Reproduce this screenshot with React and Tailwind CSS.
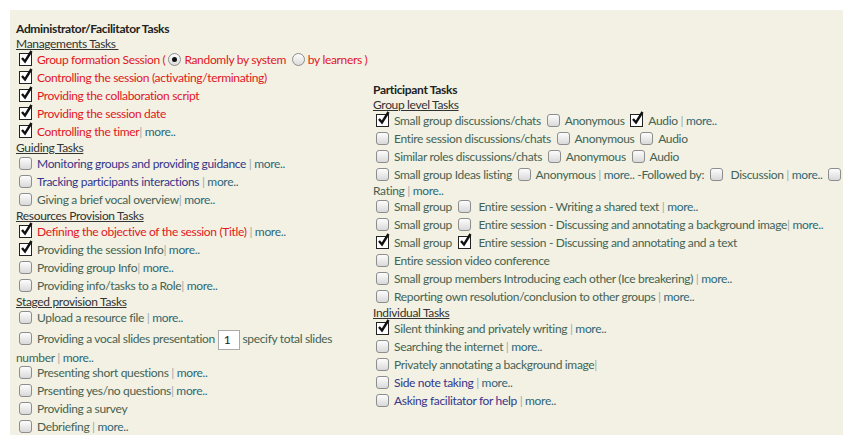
import React from 'react';

const RED = 'text-[#e3161f]';
const BLUE = 'text-[#35358a]';
const GREEN = 'text-[#456353]';

const Box = ({ checked }) => (
    <span className="relative inline-block w-[13px] h-[13px] align-[-2px] mr-[5px] ml-[3px]">
        {checked ? (
            <span className="absolute inset-0 border border-[#222] bg-white" />
        ) : (
            <span className="absolute inset-0 border border-[#8d8d8d] rounded-[3px] bg-gradient-to-b from-[#fdfdfd] to-[#d9d9d9]" />
        )}
        {checked && (
            <svg className="absolute left-[1px] top-[-3px]" width="13" height="14" viewBox="0 0 13 14">
                <path d="M2 8 L5 11.5 L11.5 1" fill="none" stroke="#111" strokeWidth="2.4" />
            </svg>
        )}
    </span>
);

const Radio = ({ on }) => (
    <span className="relative inline-block w-[13px] h-[13px] align-[-2px] mx-[3px] rounded-full border border-[#8d8d8d] bg-gradient-to-b from-[#fdfdfd] to-[#dcdcdc]">
        {on && <span className="absolute left-[3px] top-[3px] w-[5px] h-[5px] rounded-full bg-[#111]" />}
    </span>
);

const More = ({ bar = ' | ' }) => (
    <>
        <span className="text-[#9aa8a8]">{bar}</span>
        <span className="text-[#2e6878]">more..</span>
    </>
);

const Title = ({ children }) => (
    <div className="font-bold text-[#222] leading-[16px]">{children}</div>
);

const Heading = ({ children }) => (
    <div className="leading-[14px] text-[#333] underline">{children}</div>
);

const Row = ({ children, className = '' }) => (
    <div className={`leading-[18px] whitespace-nowrap ${className}`}>{children}</div>
);

export default function App() {
    return (
        <div className="w-[854px] h-[446px] bg-white p-[10px] pr-[11px]" style={{ fontFamily: 'Lato, "Liberation Sans", sans-serif' }}>
            <div className="h-[425px] bg-[#f2f1e3] flex text-[12px] tracking-[-0.33px] pl-[6px] pt-[11px]">
                {/* left column */}
                <div className="w-[355px]">
                    <Title>Administrator/Facilitator Tasks</Title>
                    <Heading>Managements Tasks&nbsp;</Heading>
                    <Row className={RED}><Box checked />Group formation Session (<Radio on />Randomly by system <Radio />by learners )</Row>
                    <Row className={RED}><Box checked />Controlling the session (activating/terminating)</Row>
                    <Row className={RED}><Box checked />Providing the collaboration script</Row>
                    <Row className={RED}><Box checked />Providing the session date</Row>
                    <Row className={RED}><Box checked />Controlling the timer<More bar="| " /></Row>
                    <Heading>Guiding Tasks</Heading>
                    <Row className={BLUE}><Box />Monitoring groups and providing guidance<More /></Row>
                    <Row className={BLUE}><Box />Tracking participants interactions<More /></Row>
                    <Row className={GREEN}><Box />Giving a brief vocal overview<More bar="| " /></Row>
                    <Heading>Resources Provision Tasks</Heading>
                    <Row className={RED}><Box checked />Defining the objective of the session (Title)<More /></Row>
                    <Row className={GREEN}><Box checked />Providing the session Info<More bar="| " /></Row>
                    <Row className={GREEN}><Box />Providing group Info<More bar="| " /></Row>
                    <Row className={GREEN}><Box />Providing info/tasks to a Role<More bar="| " /></Row>
                    <Heading>Staged provision Tasks</Heading>
                    <Row className={GREEN}><Box />Upload a resource file<More /></Row>
                    <div className={`${GREEN} leading-[24px] whitespace-nowrap`}>
                        <Box />Providing a vocal slides presentation{' '}
                        <span className="inline-block w-[22px] h-[20px] align-middle border border-[#aaa] bg-white text-[#222] pl-[5px] leading-[18px]">1</span>
                        {' '}specify total slides
                    </div>
                    <div className={`${GREEN} leading-[13px]`}>number<More /></div>
                    <Row className={GREEN}><Box />Presenting short questions<More /></Row>
                    <Row className={GREEN}><Box />Prsenting yes/no questions<More bar="| " /></Row>
                    <Row className={GREEN}><Box />Providing a survey</Row>
                    <Row className={GREEN}><Box />Debriefing<More /></Row>
                </div>

                {/* right column */}
                <div className="w-[465px] ml-[2px] pt-[61px]">
                    <Title>Participant Tasks</Title>
                    <Heading>Group level Tasks</Heading>
                    <Row className={GREEN}><Box checked />Small group discussions/chats <Box />Anonymous <Box checked />Audio<More /></Row>
                    <Row className={GREEN}><Box />Entire session discussions/chats <Box />Anonymous <Box />Audio</Row>
                    <Row className={GREEN}><Box />Similar roles discussions/chats <Box />Anonymous <Box />Audio</Row>
                    <Row className={GREEN}><Box />Small group Ideas listing <Box />Anonymous<More /> -Followed by: <Box /> Discussion<More /> <Box /></Row>
                    <div className={`${GREEN} leading-[14px]`}>Rating<More /></div>
                    <Row className={GREEN}><Box />Small group <Box /> Entire session - Writing a shared text<More /></Row>
                    <Row className={GREEN}><Box />Small group <Box /> Entire session - Discussing and annotating a background image<More bar="| " /></Row>
                    <Row className={GREEN}><Box checked />Small group <Box checked /> Entire session - Discussing and annotating and a text</Row>
                    <Row className={GREEN}><Box />Entire session video conference</Row>
                    <Row className={GREEN}><Box />Small group members Introducing each other (Ice breakering)<More /></Row>
                    <Row className={GREEN}><Box />Reporting own resolution/conclusion to other groups<More /></Row>
                    <Heading>Individual Tasks</Heading>
                    <Row className={GREEN}><Box checked />Silent thinking and privately writing<More /></Row>
                    <Row className={GREEN}><Box />Searching the internet<More /></Row>
                    <Row className={GREEN}><Box />Privately annotating a background image<span className="text-[#9aa8a8]">|</span></Row>
                    <Row className={BLUE}><Box />Side note taking<More /></Row>
                    <Row className={BLUE}><Box />Asking facilitator for help<More /></Row>
                </div>
            </div>
        </div>
    );
}
